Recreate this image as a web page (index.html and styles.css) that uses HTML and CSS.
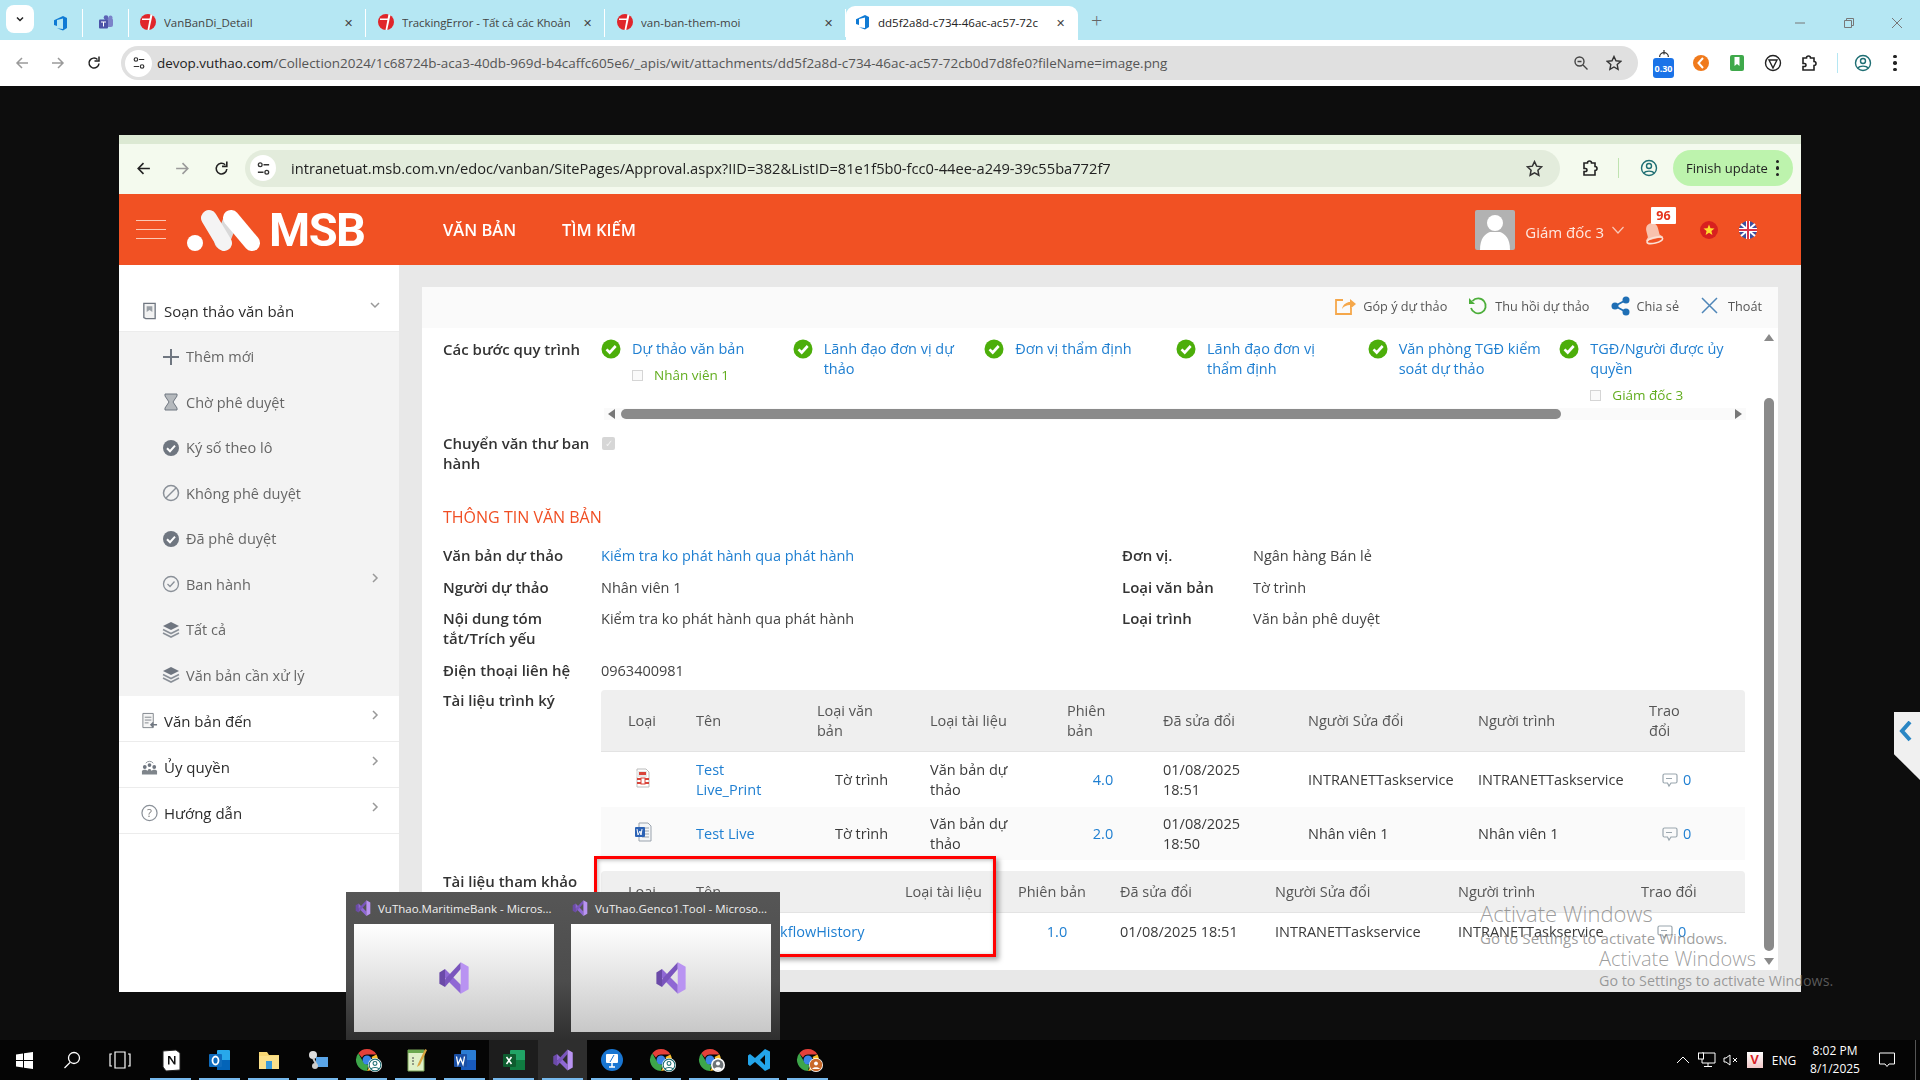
FILE: index.html
```html
<!DOCTYPE html>
<html lang="vi">
<head>
<meta charset="utf-8">
<title>dd5f2a8d-c734-46ac-ac57-72cb0d7d8fe0</title>
<link rel="stylesheet" href="styles.css">
</head>
<body>
<svg class="defs" aria-hidden="true">
  <symbol id="chrome" viewBox="0 0 24 24"><path fill="#e5403a" d="M12 1a11 11 0 0 1 9.5 5.5H12a5.5 5.5 0 0 0-5 3.2L3.300 5.300A11 11 0 0 1 12 1z"/><path fill="#fbc02d" d="M21.500 6.500A11 11 0 0 1 12 23l4.700-8.200A5.500 5.500 0 0 0 16.500 9z"/><path fill="#3da64a" d="M12 23A11 11 0 0 1 3.300 5.300L8 13.500a5.500 5.500 0 0 0 5.500 3z"/><circle cx="12" cy="12" r="4.500" fill="#3b86e8"/></symbol>
  <symbol id="redapp" viewBox="0 0 16 16"><circle cx="8" cy="8" r="8" fill="#e0262b"/><path d="M10.500 0 L7.500 16 L9.200 16 L12.500 1z" fill="#fff"/><path d="M2 4.500 h8.500 v1.500 h-8.500z" fill="#fff"/></symbol>
  <symbol id="azure" viewBox="0 0 16 16"><path fill="#0f7ad4" d="M15 3v10l-4 2.500-6-2.200 6 .7V3.500L5 5v6l-3-1V5.200L11 1z"/></symbol>
  <symbol id="teams" viewBox="0 0 16 16"><rect x="7" y="3" width="8" height="9" rx="2" fill="#7b83c9"/><circle cx="12.500" cy="2.500" r="2" fill="#7b83c9"/><circle cx="8" cy="2.500" r="2.300" fill="#5b62b5"/><rect x="1" y="4.500" width="9" height="9" rx="1" fill="#4b53a8"/><path d="M3 6.500h5v1H6v4H5v-4H3z" fill="#fff"/></symbol>
  <symbol id="vs" viewBox="0 0 32 32"><path fill="#6b4aa8" d="M3 11l5-3v16l-5-3z"/><path fill="#8f68d4" d="M8 8l14 14v8L8 16z"/><path fill="#7a55bd" d="M8 24l14-16V2L8 17z"/><path fill="#b993f2" d="M22 2l7 4v20l-7 4z"/></symbol>
  <symbol id="check" viewBox="0 0 20 20"><circle cx="10" cy="10" r="9.500" fill="#4cae0a"/><path d="M5.500 10.300l3.200 3.200 6-6.500" fill="none" stroke="#fff" stroke-width="2.600"/></symbol>
  <symbol id="chev-r" viewBox="0 0 10 10"><path d="M3 1l4 4-4 4" fill="none" stroke="#999" stroke-width="1.500"/></symbol>
  <symbol id="comment" viewBox="0 0 16 16"><path d="M2.500 2h11a1.500 1.500 0 0 1 1.500 1.500v6a1.500 1.500 0 0 1-1.500 1.500H9l-2 3-1.500-3h-3A1.500 1.500 0 0 1 1 9.500v-6A1.500 1.500 0 0 1 2.500 2z" fill="none" stroke="#9aa6ae" stroke-width="1.200"/><path d="M4 6.500h6" stroke="#9aa6ae"/></symbol>
  <symbol id="star" viewBox="0 0 16 16"><path d="M8 1.500l2 4.300 4.700.6-3.500 3.200.9 4.700L8 12l-4.100 2.300.9-4.700L1.300 6.400 6 5.800z" fill="none" stroke="#333" stroke-width="1.400"/></symbol>
  <symbol id="puzzle" viewBox="0 0 18 18"><path d="M3 4h3.500a2 2 0 0 1 4 0H14v3.500a2 2 0 0 1 0 4V16H3v-3.500h1.500a1.500 1.500 0 0 0 0-3H3z" fill="none" stroke="#222" stroke-width="1.600"/></symbol>
  <symbol id="profile" viewBox="0 0 18 18"><circle cx="9" cy="9" r="7.500" fill="none" stroke="#1e6e73" stroke-width="1.400"/><circle cx="9" cy="7" r="2.500" fill="none" stroke="#1e6e73" stroke-width="1.400"/><path d="M4 14c1.500-2.500 8.500-2.500 10 0" fill="none" stroke="#1e6e73" stroke-width="1.400"/></symbol>
  <symbol id="tune" viewBox="0 0 16 16"><circle cx="4.500" cy="4" r="2" fill="none" stroke="#333" stroke-width="1.400"/><path d="M8 4h6M2 12h6" stroke="#333" stroke-width="1.400"/><circle cx="11.500" cy="12" r="2" fill="none" stroke="#333" stroke-width="1.400"/></symbol>
  <symbol id="back" viewBox="0 0 16 16"><path d="M14 8H3M8 3L3 8l5 5" fill="none" stroke="currentColor" stroke-width="1.500"/></symbol>
  <symbol id="fwd" viewBox="0 0 16 16"><path d="M2 8h11M8 3l5 5-5 5" fill="none" stroke="currentColor" stroke-width="1.500"/></symbol>
  <symbol id="reload" viewBox="0 0 16 16"><path d="M13 8.500A5 5 0 1 1 11.500 4.500" fill="none" stroke="currentColor" stroke-width="1.500"/><path d="M13 1.500v4.500H8.500" fill="none" stroke="currentColor" stroke-width="1.500"/></symbol>
  <symbol id="shield" viewBox="0 0 18 18"><circle cx="9" cy="9" r="7" fill="#6e7478"/><circle cx="9" cy="7" r="2.600" fill="#fff"/><path d="M4 14c1-3 9-3 10 0a7 7 0 0 1-10 0z" fill="#fff"/></symbol>
  <symbol id="badge-check" viewBox="0 0 18 18"><circle cx="9" cy="9" r="8" fill="#6f7680"/><path d="M5 9.200l3 3 5-5.500" fill="none" stroke="#fff" stroke-width="2"/></symbol>
  <symbol id="layers" viewBox="0 0 18 18"><path d="M9 1l8 4-8 4-8-4z" fill="#6f7680"/><path d="M1 8.500l8 4 8-4M1 12l8 4 8-4" fill="none" stroke="#8a9098" stroke-width="1.600"/></symbol>
</svg>

<header class="chrome">
  <div class="tabbar">
    <button class="tab-search"><svg width="10" height="10" viewBox="0 0 10 10"><path d="M2 3.500l3 3 3-3" fill="none" stroke="#222" stroke-width="1.500"/></svg></button>
    <span class="pin"><svg class="ic16"><use href="#azure"/></svg></span>
    <span class="pin"><svg class="ic16"><use href="#teams"/></svg></span>
    <div class="tab"><svg class="ic16"><use href="#redapp"/></svg><span class="tab-title">VanBanDi_Detail</span><span class="tab-x">✕</span></div>
    <div class="tab"><svg class="ic16"><use href="#redapp"/></svg><span class="tab-title">TrackingError - Tất cả các Khoản</span><span class="tab-x">✕</span></div>
    <div class="tab tab-wide"><svg class="ic16"><use href="#redapp"/></svg><span class="tab-title">van-ban-them-moi</span><span class="tab-x">✕</span></div>
    <div class="tab tab-active"><svg class="ic16"><use href="#azure"/></svg><span class="tab-title">dd5f2a8d-c734-46ac-ac57-72c</span><span class="tab-x">✕</span></div>
    <span class="new-tab">+</span>
    <div class="win-ctl">
      <svg width="12" height="12" viewBox="0 0 12 12"><path d="M1 6h10" stroke="#777"/></svg>
      <svg width="12" height="12" viewBox="0 0 12 12"><path d="M1.500 3.500h7v7h-7zM3.500 3.500v-2h7v7h-2" fill="none" stroke="#777"/></svg>
      <svg width="12" height="12" viewBox="0 0 12 12"><path d="M1 1l10 10M11 1L1 11" stroke="#777"/></svg>
    </div>
  </div>
  <div class="toolbar">
    <svg class="nav-ic muted"><use href="#back"/></svg>
    <svg class="nav-ic muted"><use href="#fwd"/></svg>
    <svg class="nav-ic"><use href="#reload"/></svg>
    <div class="omni">
      <span class="omni-site"><svg width="14" height="14"><use href="#tune"/></svg></span>
      <span class="omni-url"><b>devop.vuthao.com</b>/Collection2024/1c68724b-aca3-40db-969d-b4caffc605e6/_apis/wit/attachments/dd5f2a8d-c734-46ac-ac57-72cb0d7d8fe0?fileName=image.png</span>
      <svg class="omni-zoom" width="16" height="16" viewBox="0 0 16 16"><circle cx="6.500" cy="6.500" r="4.500" fill="none" stroke="#444" stroke-width="1.400"/><path d="M10 10l4.500 4.500M4.500 6.500h4" stroke="#444" stroke-width="1.400"/></svg>
      <svg width="16" height="16"><use href="#star"/></svg>
    </div>
    <div class="ext-row">
      <span class="ext-wrap">
        <svg class="ext-dial" viewBox="0 0 16 10"><path d="M3 9a5 5 0 0 1 10 0" fill="none" stroke="#333" stroke-width="1.400"/><path d="M8 1v5" stroke="#333" stroke-width="1.400"/></svg>
        <span class="ext-score">0.30</span>
      </span>
      <svg class="ext-ic" viewBox="0 0 18 18"><circle cx="9" cy="9" r="8" fill="#f07a1c"/><path d="M11 4L6.500 9l4.500 5" fill="none" stroke="#fff" stroke-width="2"/></svg>
      <svg class="ext-ic" viewBox="0 0 18 18"><rect x="2" y="1" width="14" height="16" rx="2" fill="#3fa94b"/><path d="M6.500 3h5v9L9 10l-2.500 2z" fill="#fff"/></svg>
      <svg class="ext-ic" viewBox="0 0 18 18"><circle cx="9" cy="9" r="7.500" fill="none" stroke="#222" stroke-width="1.400"/><path d="M5 6h8L9 14z" fill="none" stroke="#222" stroke-width="1.400"/></svg>
      <svg class="ext-ic"><use href="#puzzle"/></svg>
      <span class="ext-sep"></span>
      <svg class="ext-ic"><use href="#profile"/></svg>
      <span class="dots"><i></i><i></i><i></i></span>
    </div>
  </div>
</header>

<main class="stage">
  <div class="shot">
    <div class="shot-strip"></div>
    <div class="shot-bar">
      <svg class="snav"><use href="#back"/></svg>
      <svg class="snav muted"><use href="#fwd"/></svg>
      <svg class="snav"><use href="#reload"/></svg>
      <div class="somni">
        <span class="somni-site"><svg width="15" height="15"><use href="#tune"/></svg></span>
        <span class="somni-url">intranetuat.msb.com.vn/edoc/vanban/SitePages/Approval.aspx?IID=382&amp;ListID=81e1f5b0-fcc0-44ee-a249-39c55ba772f7</span>
        <svg width="17" height="17"><use href="#star"/></svg>
      </div>
      <svg class="sb-puzzle"><use href="#puzzle"/></svg>
      <span class="sb-sep"></span>
      <svg class="sb-profile"><use href="#profile"/></svg>
      <div class="finish"><span>Finish update</span><span class="dots"><i></i><i></i><i></i></span></div>
    </div>

    <div class="site-head">
      <div class="burger"><i></i><i></i><i></i></div>
      <div class="logo">
        <svg width="74" height="42" viewBox="0 0 74 42"><circle cx="8" cy="34" r="8" fill="#fff"/><path d="M35 33L44 10" fill="none" stroke="#d9d9d9" stroke-width="15" stroke-linecap="round"/><path d="M22 9l15 25" fill="none" stroke="#f4f4f4" stroke-width="16" stroke-linecap="round"/><path d="M44 9l21 25" fill="none" stroke="#fff" stroke-width="16" stroke-linecap="round"/></svg>
        <span class="logo-text">MSB</span>
      </div>
      <nav class="site-nav"><a>VĂN BẢN</a><a>TÌM KIẾM</a></nav>
      <div class="user">
        <span class="avatar"><svg width="40" height="40" viewBox="0 0 40 40"><circle cx="20" cy="13" r="8" fill="#fff"/><path d="M5 40c0-12 5-16 10-18h10c5 2 10 6 10 18z" fill="#fff"/></svg></span>
        <span class="user-name">Giám đốc 3</span>
        <svg class="user-chev" width="14" height="10" viewBox="0 0 14 10"><path d="M1.500 2l5.500 6 5.500-6" fill="none" stroke="#f8c8b8" stroke-width="1.200"/></svg>
        <span class="bell">
          <svg width="22" height="24" viewBox="0 0 22 24"><g transform="rotate(-14 11 12)"><path d="M11 2c4 0 6 3 6 7v6l3 3H2l3-3V9c0-4 2-7 6-7z" fill="#f8c2ae"/><ellipse cx="11" cy="19.500" rx="8" ry="2.800" fill="none" stroke="#fbe0d4" stroke-width="1.500"/></g></svg>
          <span class="bell-count">96</span>
        </span>
        <svg class="flag" viewBox="0 0 18 18"><circle cx="9" cy="9" r="9" fill="#d8201f"/><path d="M9 3.500l1.500 3.800 4 .2-3.100 2.500 1 3.900L9 11.700l-3.400 2.200 1-3.900L3.500 7.500l4-.2z" fill="#ffdc2e"/></svg>
        <svg class="flag" viewBox="0 0 18 18"><circle cx="9" cy="9" r="9" fill="#3c4fa0"/><path d="M2 3l14 12M16 3L2 15" stroke="#fff" stroke-width="2"/><path d="M9 0v18M0 9h18" stroke="#fff" stroke-width="4"/><path d="M9 0v18M0 9h18" stroke="#d8344a" stroke-width="2"/></svg>
      </div>
    </div>

    <div class="site-body">
      <aside class="sidebar">
        <div class="menu-head menu-first">
          <svg class="mi" viewBox="0 0 18 18"><path d="M3 1h12v16H5l-2-1z" fill="#f2f2f2" stroke="#6f7680" stroke-width="1.400"/><path d="M6 4h6v6L9 8l-3 2z" fill="#9aa0a6"/></svg>
          <span>Soạn thảo văn bản</span>
          <svg class="chev" viewBox="0 0 10 10"><path d="M1 3l4 4 4-4" fill="none" stroke="#999" stroke-width="1.500"/></svg>
        </div>
        <ul class="submenu">
          <li><svg class="si" viewBox="0 0 18 18"><path d="M9 1v16M1 9h16" stroke="#6f7680" stroke-width="2"/></svg>Thêm mới</li>
          <li><svg class="si" viewBox="0 0 18 18"><path d="M3 1h12v2l-4 6 4 6v2H3v-2l4-6-4-6z" fill="#b5b9bd" stroke="#6f7680"/></svg>Chờ phê duyệt</li>
          <li><svg class="si"><use href="#badge-check"/></svg>Ký số theo lô</li>
          <li><svg class="si" viewBox="0 0 18 18"><circle cx="9" cy="9" r="7.500" fill="none" stroke="#8a9098" stroke-width="1.500"/><path d="M4 14L14 4" stroke="#8a9098" stroke-width="1.500"/></svg>Không phê duyệt</li>
          <li><svg class="si"><use href="#badge-check"/></svg>Đã phê duyệt</li>
          <li><svg class="si" viewBox="0 0 18 18"><circle cx="9" cy="9" r="7.500" fill="none" stroke="#8a9098" stroke-width="1.300"/><path d="M5.500 9l2.500 2.500 4.500-5" fill="none" stroke="#8a9098" stroke-width="1.300"/></svg>Ban hành<svg class="chev"><use href="#chev-r"/></svg></li>
          <li><svg class="si"><use href="#layers"/></svg>Tất cả</li>
          <li><svg class="si"><use href="#layers"/></svg>Văn bản cần xử lý</li>
        </ul>
        <div class="menu-head">
          <svg class="mi" viewBox="0 0 18 18"><path d="M2 1h11v15H2z" fill="#f5f5f5" stroke="#7f858b"/><path d="M4 5h7M4 8h7M4 11h4" stroke="#7f858b"/><path d="M17 13h-6M13 10.500L10.500 13l2.500 2.500" fill="none" stroke="#6f7680" stroke-width="1.500"/></svg>
          <span>Văn bản đến</span><svg class="chev"><use href="#chev-r"/></svg>
        </div>
        <div class="menu-head">
          <svg class="mi" viewBox="0 0 18 18"><circle cx="4" cy="9" r="2" fill="#6f7680"/><circle cx="9" cy="7" r="2" fill="#6f7680"/><circle cx="14" cy="9" r="2" fill="#6f7680"/><path d="M1 17v-4l2-1h2l2 1 1-2h2l1 2 2-1h2l2 1v4z" fill="#7f858b"/><path d="M5 5a5 5 0 0 1 8 0" fill="none" stroke="#8a9098"/></svg>
          <span>Ủy quyền</span><svg class="chev"><use href="#chev-r"/></svg>
        </div>
        <div class="menu-head">
          <svg class="mi" viewBox="0 0 18 18"><circle cx="9" cy="9" r="8" fill="none" stroke="#8a9098" stroke-width="1.300"/><text x="9" y="13" text-anchor="middle" class="qmark">?</text></svg>
          <span>Hướng dẫn</span><svg class="chev"><use href="#chev-r"/></svg>
        </div>
      </aside>

      <section class="content">
        <div class="card">
          <div class="actions">
            <span class="act"><svg width="21" height="18" viewBox="0 0 21 18"><path d="M8 3H1v14h15v-6" fill="none" stroke="#f5a74a" stroke-width="1.800"/><path d="M7 12c1-5 5-7 8-7V2l6 5-6 5V8c-3 0-6 1-8 4z" fill="#f5a74a"/></svg>Góp ý dự thảo</span>
            <span class="act"><svg width="20" height="20" viewBox="0 0 20 20"><path d="M4.500 5A7.500 7.500 0 1 1 3 12" fill="none" stroke="#4cae3a" stroke-width="1.800"/><path d="M1 2v6h6z" fill="#4cae3a"/></svg>Thu hồi dự thảo</span>
            <span class="act"><svg width="19" height="20" viewBox="0 0 19 20"><circle cx="15" cy="4" r="3.500" fill="#1f6fb5"/><circle cx="4" cy="10" r="3.500" fill="#1f6fb5"/><circle cx="15" cy="16" r="3.500" fill="#1f6fb5"/><path d="M15 4L4 10l11 6" fill="none" stroke="#1f6fb5" stroke-width="1.800"/></svg>Chia sẻ</span>
            <span class="act act-exit"><svg width="17" height="17" viewBox="0 0 17 17"><path d="M1 1l15 15M16 1L1 16" stroke="#4f86b8" stroke-width="1.500"/></svg>Thoát</span>
          </div>
          <div class="scroll-wrap">
            <div class="scroll-body">
              <div class="flow-row">
                <div class="lbl">Các bước quy trình</div>
                <div class="steps">
                  <div class="step"><svg class="step-ic"><use href="#check"/></svg><div><a class="link">Dự thảo văn bản</a><div class="who"><i class="box"></i>Nhân viên 1</div></div></div>
                  <div class="step"><svg class="step-ic"><use href="#check"/></svg><div><a class="link">Lãnh đạo đơn vị dự thảo</a></div></div>
                  <div class="step"><svg class="step-ic"><use href="#check"/></svg><div><a class="link">Đơn vị thẩm định</a></div></div>
                  <div class="step"><svg class="step-ic"><use href="#check"/></svg><div><a class="link">Lãnh đạo đơn vị thẩm định</a></div></div>
                  <div class="step"><svg class="step-ic"><use href="#check"/></svg><div><a class="link">Văn phòng TGĐ kiểm soát dự thảo</a></div></div>
                  <div class="step"><svg class="step-ic"><use href="#check"/></svg><div><a class="link">TGĐ/Người được ủy quyền</a><div class="who"><i class="box"></i>Giám đốc 3</div></div></div>
                </div>
              </div>
              <div class="hbar"><i class="tri-l"></i><span class="hthumb"></span><i class="tri-r"></i></div>
              <div class="flag-row">
                <div class="lbl">Chuyển văn thư ban hành</div>
                <span class="disabled-box">✓</span>
              </div>
              <h2 class="section-title">THÔNG TIN VĂN BẢN</h2>
              <div class="info">
                <div class="lbl">Văn bản dự thảo</div><div class="val"><a class="link">Kiểm tra ko phát hành qua phát hành</a></div><div class="lbl">Đơn vị.</div><div class="val">Ngân hàng Bán lẻ</div>
                <div class="lbl">Người dự thảo</div><div class="val">Nhân viên 1</div><div class="lbl">Loại văn bản</div><div class="val">Tờ trình</div>
                <div class="lbl lbl-narrow">Nội dung tóm tắt/Trích yếu</div><div class="val">Kiểm tra ko phát hành qua phát hành</div><div class="lbl">Loại trình</div><div class="val">Văn bản phê duyệt</div>
                <div class="lbl">Điện thoại liên hệ</div><div class="val span3">0963400981</div>
              </div>
              <div class="doc-row">
                <div class="lbl lbl-doc">Tài liệu trình ký</div>
                <table class="docs docs-a">
                  <colgroup><col class="a1"><col class="a2"><col class="a3"><col class="a4"><col class="a5"><col class="a6"><col class="a7"><col class="a8"><col class="a9"></colgroup>
                  <thead><tr><th class="first">Loại</th><th>Tên</th><th>Loại văn<br>bản</th><th>Loại tài liệu</th><th>Phiên<br>bản</th><th>Đã sửa đổi</th><th>Người Sửa đổi</th><th>Người trình</th><th>Trao<br>đổi</th></tr></thead>
                  <tbody>
                    <tr><td class="ctr"><svg class="file" viewBox="0 0 18 20"><path d="M3 1h9l3 3v15H3z" fill="#fff" stroke="#bbb"/><rect x="2" y="3" width="11" height="6" fill="#e8e8e8"/><path d="M3 11h12M3 15h12" stroke="#d9443a" stroke-width="2"/><rect x="7" y="10" width="4" height="6" fill="#fff" stroke="#d9443a"/><path d="M5 4h7v3H5z" fill="#d9443a"/></svg></td><td><a class="link">Test<br>Live_Print</a></td><td class="ctr">Tờ trình</td><td>Văn bản dự<br>thảo</td><td class="ctr"><a class="link">4.0</a></td><td>01/08/2025<br>18:51</td><td>INTRANETTaskservice</td><td>INTRANETTaskservice</td><td class="cmt"><svg class="cmt-ic"><use href="#comment"/></svg><a class="link">0</a></td></tr>
                    <tr class="alt"><td class="ctr"><svg class="file" viewBox="0 0 18 20"><path d="M5 1h9l3 3v15H5z" fill="#f4f6f8" stroke="#9aa3ad"/><path d="M8 6h7M8 9h7M8 12h7M8 15h7" stroke="#9aa3ad"/><rect x="1" y="5" width="10" height="10" rx="1" fill="#2b62b5"/><path d="M3 7l1 6 2-4 1 4 1-6" fill="none" stroke="#fff"/></svg></td><td><a class="link">Test Live</a></td><td class="ctr">Tờ trình</td><td>Văn bản dự<br>thảo</td><td class="ctr"><a class="link">2.0</a></td><td>01/08/2025<br>18:50</td><td>Nhân viên 1</td><td>Nhân viên 1</td><td class="cmt"><svg class="cmt-ic"><use href="#comment"/></svg><a class="link">0</a></td></tr>
                  </tbody>
                </table>
              </div>
              <div class="doc-row doc-row-b">
                <div class="lbl lbl-doc">Tài liệu tham khảo</div>
                <table class="docs docs-b">
                  <colgroup><col class="b1"><col class="b2"><col class="b3"><col class="b4"><col class="b5"><col class="b6"><col class="b7"><col class="b8"></colgroup>
                  <thead><tr><th class="first">Loại</th><th>Tên</th><th>Loại tài liệu</th><th>Phiên bản</th><th>Đã sửa đổi</th><th>Người Sửa đổi</th><th>Người trình</th><th>Trao đổi</th></tr></thead>
                  <tbody><tr><td></td><td class="wf"><a class="link">WorkflowHistory</a></td><td></td><td class="ctr"><a class="link">1.0</a></td><td>01/08/2025 18:51</td><td>INTRANETTaskservice</td><td>INTRANETTaskservice</td><td class="cmt cmt-b"><svg class="cmt-ic"><use href="#comment"/></svg><a class="link">0</a></td></tr></tbody>
                </table>
              </div>
            </div>
            <div class="vbar"><i class="tri-u"></i><span class="vthumb"></span><i class="tri-d"></i></div>
          </div>
        </div>
      </section>
    </div>
  </div>
</main>

<footer class="taskbar">
  <div class="tb"><svg width="17" height="17" viewBox="0 0 17 17"><path d="M0 2.500l7-1v6.500H0zM8 1.300L17 0v8H8zM0 9h7v6.500l-7-1zM8 9h9v8l-9-1.300z" fill="#fff"/></svg></div>
  <div class="tb"><svg width="18" height="18" viewBox="0 0 18 18"><circle cx="11" cy="7" r="5.500" fill="none" stroke="#fff" stroke-width="1.300"/><path d="M7 11.500L1.500 17" stroke="#fff" stroke-width="1.300"/></svg></div>
  <div class="tb"><svg width="22" height="18" viewBox="0 0 22 18"><path d="M6 1h10v16H6zM3 3H1v12h2M19 3h2v12h-2" fill="none" stroke="#fff" stroke-width="1.200"/></svg></div>
  <div class="tb run"><svg class="tbi" viewBox="0 0 24 24"><path d="M4 3l13-1 4 3v17l-14 1-3-4z" fill="#fff" stroke="#222"/><path d="M9 8h2l4 6V8h1.500v8.500H15l-4.500-6.500v6.500H9z" fill="#111"/></svg></div>
  <div class="tb run"><svg class="tbi" viewBox="0 0 24 24"><rect x="9" y="2" width="13" height="20" rx="1" fill="#28a8ea"/><path d="M9 12l13 0v10H9z" fill="#0364b8"/><rect x="1" y="6" width="13" height="13" rx="1" fill="#0f6cbd"/><ellipse cx="7.500" cy="12.500" rx="3" ry="4" fill="none" stroke="#fff" stroke-width="1.800"/></svg></div>
  <div class="tb run"><svg class="tbi" viewBox="0 0 24 24"><path d="M2 4h8l2 3h10v14H2z" fill="#f7d774"/><path d="M2 8h20v13H2z" fill="#fbe08a"/><rect x="9" y="13" width="6" height="8" fill="#3a9bdc"/></svg></div>
  <div class="tb run"><svg class="tbi" viewBox="0 0 24 24"><circle cx="7" cy="7" r="4" fill="#ddd"/><rect x="10" y="9" width="12" height="10" fill="#5aa5e8"/><circle cx="9" cy="18" r="3" fill="#ccc"/><path d="M7 10l3 6" stroke="#ccc" stroke-width="2"/></svg></div>
  <div class="tb run"><svg class="tbi"><use href="#chrome"/></svg><svg class="tb-over" viewBox="0 0 18 18"><use href="#profile"/></svg></div>
  <div class="tb run"><svg class="tbi" viewBox="0 0 24 24"><path d="M4 2h16v21H4z" fill="#dff0c8" stroke="#7da65a"/><path d="M4 2h16v3H4z" fill="#6aa84f"/><path d="M8 10h2M8 13h2M8 16h2" stroke="#444"/><path d="M21 1l-7 15-1 3 3-2 7-15z" fill="#d9a441"/></svg></div>
  <div class="tb run"><svg class="tbi" viewBox="0 0 24 24"><rect x="8" y="2" width="15" height="20" rx="1" fill="#2b7cd3"/><rect x="8" y="12" width="15" height="10" fill="#185abd"/><rect x="1" y="6" width="13" height="13" rx="1" fill="#1a4fa5"/><path d="M3.500 8.500l1.500 8 2.500-6 2.500 6 1.500-8" fill="none" stroke="#fff" stroke-width="1.300"/></svg></div>
  <div class="tb run tb-excel"><svg class="tbi" viewBox="0 0 24 24"><rect x="8" y="2" width="15" height="20" rx="1" fill="#21a366"/><rect x="8" y="12" width="15" height="10" fill="#107c41"/><rect x="1" y="6" width="13" height="13" rx="1" fill="#0e5c2f"/><path d="M4.500 9l5 7M9.500 9l-5 7" stroke="#fff" stroke-width="1.500"/></svg></div>
  <div class="tb run tb-vs"><svg class="tbi"><use href="#vs"/></svg></div>
  <div class="tb run"><svg class="tbi" viewBox="0 0 24 24"><circle cx="12" cy="12" r="11" fill="#1976d2"/><rect x="6" y="6" width="12" height="9" rx="1" fill="#fff"/><path d="M9 19h6M12 15v4" stroke="#fff" stroke-width="1.500"/><path d="M14 7l-4 7" stroke="#1976d2"/></svg></div>
  <div class="tb run"><svg class="tbi"><use href="#chrome"/></svg><svg class="tb-over" viewBox="0 0 18 18"><use href="#profile"/></svg></div>
  <div class="tb run"><svg class="tbi"><use href="#chrome"/></svg><svg class="tb-over" viewBox="0 0 18 18"><use href="#shield"/></svg></div>
  <div class="tb run"><svg class="tbi" viewBox="0 0 24 24"><path d="M18 1l5 2.500v17L18 23 8 14l-5 4-2-1.500V7.500L3 6l5 4zM18 7l-5 5 5 5z" fill="#23a5ea"/></svg></div>
  <div class="tb run"><svg class="tbi"><use href="#chrome"/></svg><svg class="tb-over" viewBox="0 0 18 18"><circle cx="9" cy="9" r="8" fill="#c96a2a"/><circle cx="9" cy="7" r="2.500" fill="#fff"/><path d="M4 14c1-3 9-3 10 0" fill="#fff"/></svg></div>
  <div class="tray">
    <span class="tray-it w24"><svg width="14" height="8" viewBox="0 0 14 8"><path d="M1 7l6-6 6 6" fill="none" stroke="#fff"/></svg></span>
    <span class="tray-it w24"><svg width="18" height="16" viewBox="0 0 18 16"><path d="M4 1h13v10H4zM10 11v3M6 14.500h8" fill="none" stroke="#fff"/><rect x="0.500" y="1" width="5" height="6" fill="#000" stroke="#fff"/></svg></span>
    <span class="tray-it w23"><svg width="16" height="14" viewBox="0 0 16 14"><path d="M1 5h2l4-3v10L3 9H1z" fill="none" stroke="#fff"/><path d="M10 5l4 4M14 5l-4 4" stroke="#fff"/></svg></span>
    <span class="tray-it w25"><span class="tray-v">V</span></span>
    <span class="tray-it w34 eng">ENG</span>
    <span class="clock">8:02 PM<br>8/1/2025</span>
    <span class="tray-it w36"><svg width="16" height="16" viewBox="0 0 16 16"><path d="M.5 1h15v11H10l-2 2.500L6 12H.5z" fill="none" stroke="#fff"/></svg></span>
    <span class="show-desktop"></span>
  </div>
</footer>

<div class="annotation"></div>

<div class="preview">
  <div class="pv">
    <div class="pv-title"><svg class="pv-ic"><use href="#vs"/></svg><span>VuThao.MaritimeBank - Micros...</span></div>
    <div class="pv-thumb"><svg class="pv-logo"><use href="#vs"/></svg></div>
  </div>
  <div class="pv">
    <div class="pv-title"><svg class="pv-ic"><use href="#vs"/></svg><span>VuThao.Genco1.Tool - Microso...</span></div>
    <div class="pv-thumb"><svg class="pv-logo"><use href="#vs"/></svg></div>
  </div>
</div>

<div class="side-tab"><svg width="14" height="22" viewBox="0 0 14 22"><path d="M11 1L3 10l8 9" fill="none" stroke="#2a86c4" stroke-width="4"/></svg></div>

<div class="watermark wm-a"><div class="wm-big">Activate Windows</div><div class="wm-small">Go to Settings to activate Windows.</div></div>
<div class="watermark wm-b"><div class="wm-big">Activate Windows</div><div class="wm-small">Go to Settings to activate Windows.</div></div>
</body>
</html>
```
FILE: styles.css
```css
* { box-sizing: border-box; }
html, body { margin: 0; height: 100%; }
body {
  width: 1920px; height: 1080px; overflow: hidden; position: relative;
  display: flex; flex-direction: column;
  background: #0d0d0d; color: #333;
  font-family: "Open Sans", "Noto Sans", "Liberation Sans", sans-serif;
}
.defs { position: absolute; width: 0; height: 0; }
a { text-decoration: none; }
ul { margin: 0; padding: 0; list-style: none; }
i { display: block; font-style: normal; }
button { border: 0; font: inherit; padding: 0; }
.ic16 { width: 16px; height: 16px; flex: none; }

/* outer browser */
.chrome { flex: none; height: 86px; }
.tabbar { height: 40px; background: #b5e7f3; display: flex; align-items: flex-end; padding-left: 6px; position: relative; }
.tab-search { width: 28px; height: 28px; margin-bottom: 7px; background: #fff; border-radius: 8px; display: flex; align-items: center; justify-content: center; flex: none; }
.pin { width: 46px; margin-left: 3px; display: flex; align-items: center; justify-content: center; flex: none; border-right: 1px solid #fff; margin-bottom: 3px; height: 28px; }
.pin + .pin { margin-left: 0; }
.tab { width: 237px; height: 34px; padding: 0 9px 2px 11px; display: flex; align-items: center; gap: 8px; flex: none; font-size: 11.500px; color: #444; position: relative; }
.tab + .tab { width: 239px; padding-left: 12px; }
.tab::after { content: ""; position: absolute; right: 0; top: 3px; height: 28px; width: 1px; background: #fff; }
.tab + .tab.tab-wide { width: 241px; }
.tab-title { flex: 1; white-space: nowrap; overflow: hidden; }
.tab:nth-of-type(2) .tab-title { letter-spacing: -.1px; }
.tab-x { width: 18px; text-align: center; font-size: 11px; color: #444; flex: none; }
.tab + .tab.tab-active { width: 232px; height: 34px; background: #fff; border-radius: 9px 9px 0 0; padding-left: 8px; color: #222; }
.tab-active::after { display: none; }
.new-tab { font-size: 20px; color: #666; margin-left: 13px; margin-bottom: 5px; line-height: 28px; font-weight: 300; }
.win-ctl { margin-left: auto; width: 126px; display: flex; justify-content: space-between; padding: 0 17px 0 0; height: 34px; align-items: center; }
.toolbar { height: 46px; background: #fff; display: flex; align-items: center; padding: 0 0 0 14px; }
.nav-ic { width: 16px; height: 16px; margin-right: 20px; color: #222; flex: none; }
.muted { color: #9a9a9a; }
.omni { width: 1517px; height: 34px; margin-left: -1px; background: #e0e0e0; border-radius: 17px; display: flex; align-items: center; padding: 0 16px 0 4px; flex: none; }
.omni-site { width: 27px; height: 27px; border-radius: 50%; background: #fff; display: flex; align-items: center; justify-content: center; flex: none; }
.omni-url { flex: 1; font-size: 13.450px; color: #555; margin-left: 5px; white-space: nowrap; overflow: hidden; }
.omni-url b { font-weight: 400; color: #222; }
.omni-zoom { margin-right: 17px; }
.ext-row { flex: 1; display: flex; align-items: center; padding-left: 15px; }
.ext-wrap { width: 21px; display: flex; flex-direction: column; align-items: center; flex: none; padding-top: 1px; }
.ext-dial { width: 14px; height: 9px; }
.ext-score { width: 21px; height: 20px; background: #1a73e8; color: #fff; border-radius: 3px; font-size: 9px; font-weight: 700; display: flex; align-items: center; justify-content: center; }
.ext-ic { width: 18px; height: 18px; margin-left: 18px; flex: none; }
.ext-ic + .ext-sep { margin-left: 19px; }
.ext-sep { width: 1px; height: 20px; background: #b5e7f3; }
.ext-sep + .ext-ic { margin-left: 16px; }
.dots { display: flex; flex-direction: column; gap: 3px; margin-left: 21px; }
.dots i { width: 3.500px; height: 3.500px; border-radius: 50%; background: #222; }

/* embedded screenshot */
.stage { flex: 1; padding: 49px 119px 0; min-height: 0; }
.shot { width: 1682px; height: 857px; display: flex; flex-direction: column; background: #fff; filter: blur(.35px); }
.shot-strip { flex: none; height: 9px; background: #dce9d3; }
.shot-bar { flex: none; height: 50px; background: #f4faee; display: flex; align-items: center; padding: 0 8px 2px 16px; }
.snav { width: 17px; height: 17px; margin-right: 22px; color: #222; flex: none; }
.snav.muted { color: #9a9a9a; }
.somni { width: 1315px; height: 37px; margin-left: -7px; background: #e3ecdc; border-radius: 19px; display: flex; align-items: center; padding: 0 17px 0 5px; flex: none; }
.somni-site { width: 26px; height: 26px; border-radius: 50%; background: #fff; display: flex; align-items: center; justify-content: center; flex: none; }
.somni-url { flex: 1; margin-left: 15px; font-size: 14.670px; color: #222; white-space: nowrap; overflow: hidden; }
.sb-puzzle { width: 18px; height: 18px; margin-left: 21px; flex: none; }
.sb-sep { width: 1px; height: 20px; background: #bfe3b0; margin-left: 19px; }
.sb-profile { width: 18px; height: 18px; margin-left: 21px; flex: none; }
.finish { margin-left: 15px; width: 121px; height: 36px; border-radius: 18px; background: #bdf3ad; display: flex; align-items: center; justify-content: space-between; padding: 0 14px 0 13px; font-size: 13px; color: #222; }
.finish .dots { margin-left: 0; }

.site-head { flex: none; height: 71px; background: #f15123; display: flex; align-items: center; padding: 0 0 0 17px; color: #fff; }
.burger { width: 30px; display: flex; flex-direction: column; gap: 8px; }
.burger i { height: 1px; background: #fbc9b6; }
.logo { display: flex; align-items: center; margin-left: 21px; gap: 8px; width: 256px; }
.logo-text { font-family: "Roboto", "Liberation Sans", sans-serif; font-size: 47px; font-weight: 700; letter-spacing: -1.500px; line-height: 42px; }
.site-nav { display: flex; gap: 46px; font-size: 16.500px; font-weight: 600; }
.user { margin-left: auto; display: flex; align-items: center; padding-right: 44px; }
.avatar { width: 40px; height: 40px; background: #b2b2b2; border-radius: 2px; overflow: hidden; display: block; }
.user-name { margin-left: 10px; font-size: 15px; color: #fde9e1; padding-top: 4px; }
.user-chev { margin-left: 7px; }
.bell { position: relative; margin-left: 17px; width: 32px; height: 36px; display: flex; align-items: flex-end; padding-bottom: 3px; }
.bell-count { position: absolute; left: 9px; top: -5px; width: 25px; height: 17px; background: #fff; color: #e5331b; font-size: 12.500px; font-weight: 700; text-align: center; line-height: 17px; border-radius: 1px; }
.flag { width: 18px; height: 18px; margin-left: 21px; flex: none; }
.bell + .flag { margin-left: 26px; }

.site-body { flex: 1; display: flex; min-height: 0; background: #e8e8e8; }
.sidebar { width: 280px; flex: none; background: #fff; font-size: 15px; }
.menu-head { height: 46px; padding: 5px 19px 0 22px; display: flex; align-items: center; border-bottom: 1px solid #ececec; color: #2c2c2c; font-weight: 500; }
.menu-first { height: 67px; padding-top: 25px; }
.mi { width: 17px; height: 18px; margin-right: 6px; flex: none; }
.chev { width: 10px; height: 10px; margin-left: auto; margin-top: -12px; flex: none; }
.qmark { font-size: 12px; fill: #777; font-family: "Open Sans", sans-serif; }
.submenu { background: #f3f3f3; }
.submenu li { height: 45.500px; padding: 4px 19px 0 43px; display: flex; align-items: center; color: #666; font-size: 14.500px; }
.si { width: 18px; height: 18px; margin-right: 6px; flex: none; }

.content { flex: 1; padding: 22px 23px 22px 23px; min-width: 0; }
.card { height: 100%; display: flex; flex-direction: column; background: #fff; }
.actions { height: 41px; flex: none; background: #fafafa; display: flex; justify-content: flex-end; align-items: center; gap: 21px; padding: 0 16px 4px 0; font-size: 12.700px; color: #555; }
.act { display: flex; align-items: center; gap: 7px; }
.act-exit { gap: 10px; margin-left: 1px; }
.scroll-wrap { flex: 1; display: flex; min-height: 0; }
.scroll-body { flex: 1; min-width: 0; padding: 11px 0 0 21px; overflow: hidden; font-size: 14.500px; line-height: 20px; }
.vbar { width: 16px; flex: none; display: flex; flex-direction: column; align-items: center; padding: 6px 3px 5px 0; }
.tri-u { border: 5px solid transparent; border-top: 0; border-bottom: 7px solid #8a8a8a; }
.tri-d { border: 5px solid transparent; border-bottom: 0; border-top: 7px solid #8a8a8a; margin-top: 7px; }
.vthumb { width: 10px; flex: 1; margin-top: 57px; background: #8a8a8a; border-radius: 5px; }

.lbl { font-weight: 600; color: #333; font-size: 15px; }
.link { color: #1f7fd1; }
.val { color: #444; line-height: 22px; margin-bottom: -2px; }
.flow-row { display: flex; height: 69px; }
.flow-row .lbl { width: 158px; flex: none; }
.steps { width: 1150px; flex: none; display: grid; grid-template-columns: repeat(6, 1fr); }
.step { display: flex; gap: 11px; padding-right: 15px; }
.step-ic { width: 20px; height: 20px; flex: none; }
.who { color: #62ad1e; font-size: 13.500px; display: flex; align-items: center; margin-top: 6px; }
.box { width: 11px; height: 11px; border: 1px solid #d5d5d5; background: #fafafa; margin: 0 11px 0 0; flex: none; }
.hbar { margin-left: 161px; width: 1142px; height: 12px; background: #fafafa; display: flex; align-items: center; padding: 0 4px; }
.hthumb { width: 940px; height: 10px; background: #8a8a8a; border-radius: 5px; margin-left: 6px; }
.tri-l { border: 5px solid transparent; border-left: 0; border-right: 7px solid #777; }
.tri-r { border: 5px solid transparent; border-right: 0; border-left: 7px solid #777; margin-left: auto; }
.flag-row { display: flex; margin-top: 13px; height: 41px; }
.flag-row .lbl { width: 158px; flex: none; padding-right: 8px; }
.disabled-box { width: 13px; height: 13px; margin-left: 1px; background: #d6d6d6; border-radius: 2px; color: #f2f2f2; font-size: 10px; line-height: 13px; text-align: center; margin-top: 4px; }
.section-title { margin: 32px 0 17px; font-size: 16px; line-height: 22px; font-weight: 400; color: #f04e23; }
.info { display: grid; grid-template-columns: 158px 521px 131px 1fr; row-gap: 11.500px; }
.span3 { grid-column: span 3; }
.lbl-narrow { padding-right: 30px; }
.doc-row { display: flex; margin-top: 10px; }
.doc-row-b { margin-top: 11px; }
.lbl-doc { width: 158px; flex: none; }
.docs { width: 1144px; table-layout: fixed; border-collapse: separate; border-spacing: 0; flex: none; line-height: 20px; }
.docs th { background: #efefef; border-bottom: 1px solid #e3e3e3; font-weight: 500; color: #555; text-align: left; padding: 2px 0 0 12px; height: 62px; }
.docs th.first { padding-left: 27px; }
.docs td { padding: 2px 0 0 12px; color: #3a3a3a; height: 55px; white-space: nowrap; }
.docs th:first-child { border-top-left-radius: 4px; }
.docs th:last-child { border-top-right-radius: 4px; }
.docs .alt td { background: #fafafa; height: 53px; padding-top: 1px; }
.docs td.ctr { text-align: center; padding: 2px 0 0; }
.docs td.cmt { padding-left: 25px; }
.docs td.cmt-b { padding-left: 28px; }
.docs td.wf { padding-left: 68px; }
.docs-b th { height: 42px; }
.docs-b td { height: 38px; padding-top: 0; }
.docs-b td.ctr { padding-top: 0; }
.cmt-ic { width: 16px; height: 16px; vertical-align: -3px; margin-right: 5px; }
.file { width: 18px; height: 20px; }
.a1 { width: 83px; } .a2 { width: 121px; } .a3 { width: 113px; } .a4 { width: 137px; } .a5 { width: 96px; }
.a6 { width: 145px; } .a7 { width: 170px; } .a8 { width: 171px; } .a9 { width: 108px; }
.b1 { width: 83px; } .b2 { width: 209px; } .b3 { width: 113px; } .b4 { width: 102px; } .b5 { width: 155px; }
.b6 { width: 183px; } .b7 { width: 183px; } .b8 { width: 116px; }

/* taskbar */
.taskbar { flex: none; height: 40px; background: #050505; display: flex; }
.tb { width: 49px; height: 40px; display: flex; align-items: center; justify-content: center; position: relative; flex: none; }
.tb:nth-child(-n+3) { width: 48px; }
.tb:nth-child(4) { margin-left: 2px; }
.tbi { width: 24px; height: 24px; }
.tb-over { position: absolute; left: 26px; top: 18px; width: 14px; height: 14px; background: #fff; border-radius: 50%; }
.run::after { content: ""; position: absolute; left: 4px; right: 4px; bottom: 0; height: 2px; background: #76b9ed; }
.tb-excel { background: #1d1d1d; }
.tb-vs { background: #2e2e2e; }
.tray { margin-left: auto; display: flex; align-items: center; color: #fff; font-size: 12px; }
.tray-it { display: flex; align-items: center; justify-content: center; height: 40px; }
.w24 { width: 24px; } .w23 { width: 23px; } .w25 { width: 25px; } .w34 { width: 34px; } .w36 { width: 36px; }
.tray-v { width: 16px; height: 16px; background: linear-gradient(#fff, #f3c9c9); color: #d81f26; font-weight: 700; font-size: 13px; line-height: 16px; text-align: center; font-family: "Liberation Sans", sans-serif; }
.clock { width: 68px; text-align: center; line-height: 18px; }
.show-desktop { width: 15px; height: 40px; position: relative; }
.show-desktop::after { content: ""; position: absolute; left: 10px; top: 0; height: 40px; width: 1px; background: #555; }

/* overlays */
.annotation { position: absolute; left: 594px; top: 856px; width: 402px; height: 101px; border: 3px solid #f00; box-shadow: 3px 3px 5px rgba(0,0,0,.35), inset 1px 1px 4px rgba(0,0,0,.3); }
.preview { position: absolute; left: 346px; top: 892px; width: 434px; height: 148px; background: linear-gradient(#565656, #4c4c4c 60%, #2f2f2f); display: flex; gap: 17px; padding: 0 8px; }
.pv { width: 200px; flex: none; }
.pv-title { height: 32px; display: flex; align-items: center; color: #f0f0f0; font-size: 11.500px; gap: 6px; white-space: nowrap; }
.pv-ic { width: 18px; height: 18px; flex: none; }
.pv-thumb { height: 108px; background: linear-gradient(#fff, #c8c8c8); display: flex; align-items: center; justify-content: center; }
.pv-logo { width: 36px; height: 36px; }
.side-tab { position: absolute; right: 0; top: 712px; width: 26px; height: 68px; background: #f0f0f0; clip-path: polygon(0 0, 100% 0, 100% 100%, 0 62%); padding: 9px 0 0 5px; }
.watermark { position: absolute; color: rgba(120,120,120,.72); white-space: nowrap; }
.wm-a { left: 1480px; top: 898px; }
.wm-b { left: 1599px; top: 945px; }
.wm-big { font-size: 20px; line-height: 28px; font-weight: 300; }
.wm-a .wm-big { font-size: 22px; line-height: 30px; }
.wm-small { font-size: 15.100px; line-height: 20px; }
.wm-b .wm-small { font-size: 14.300px; margin-top: -2px; }
```
